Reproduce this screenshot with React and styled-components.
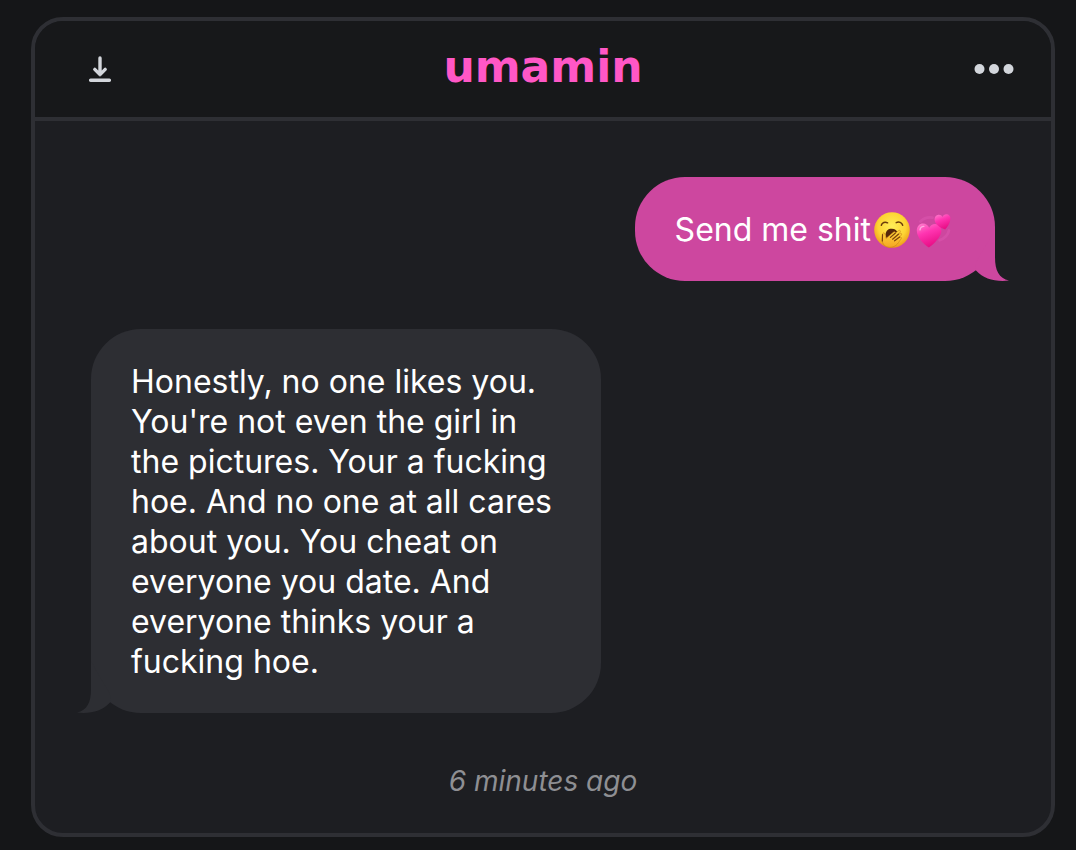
import React from "react";

import styled, { createGlobalStyle } from "styled-components";

const GlobalStyle = createGlobalStyle`
  * {
    box-sizing: border-box;
  }

  body {
    margin: 0;
    background: #151618;
    font-family: Inter, "Liberation Sans", sans-serif;
  }
`;

const Page = styled.main`
  padding: 17px 21px 13px 31px;
`;

const Card = styled.article`
  overflow: hidden;
  border: 4px solid #2e2f34;
  border-radius: 32px;
  background: #1d1e22;
`;

const Header = styled.header`
  display: flex;
  align-items: center;
  justify-content: space-between;
  height: 100px;
  padding: 0 36px 0 44px;
  border-bottom: 4px solid #2e2f34;
  background: #17181a;
`;

const IconButton = styled.button`
  display: flex;
  padding: 0;
  border: 0;
  background: none;
  color: #d3d6dc;
  cursor: pointer;
`;

const Logo = styled.a`
  padding-bottom: 4px;
  color: #ff57c6;
  font-family: "DejaVu Sans", sans-serif;
  font-size: 44px;
  font-weight: 700;
  line-height: 48px;
  text-decoration: none;
`;

const Chat = styled.div`
  display: flex;
  flex-direction: column;
  gap: 48px;
  padding: 56px 56px 32px;
`;

const Bubble = styled.div`
  position: relative;
  align-self: ${(props) => (props.$sent ? "flex-end" : "flex-start")};
  max-width: 510px;
  padding: 33px 40px 31px;
  border-radius: 50px;
  background: ${(props) => (props.$sent ? "#cd479f" : "#2d2e33")};
  color: #fff;
`;

const Message = styled.p`
  margin: 0;
  font-size: 32px;
  line-height: 40px;
`;

const TailShape = styled.svg`
  position: absolute;
  bottom: 0;
  ${(props) => (props.$sent ? "right: -14px;" : "left: -14px;")}
  fill: ${(props) => (props.$sent ? "#cd479f" : "#2d2e33")};
`;

const Emoji = styled.svg`
  margin: 0 3px;
  vertical-align: -7px;
`;

const Time = styled.time`
  align-self: center;
  color: #8e8f93;
  font-size: 28px;
  font-style: italic;
  line-height: 40px;
`;

const DownloadIcon = () => (
  <svg
    width="34"
    height="34"
    viewBox="-4 0 34 34"
    fill="none"
    stroke="currentColor"
    strokeWidth="3.4"
    strokeLinecap="round"
    strokeLinejoin="round"
    aria-hidden="true"
  >
    <path d="M17 6v16.4M11.8 17.4l5.2 5.2 5.2-5.2M7.6 28.2h18.8" />
  </svg>
);

const DotsIcon = () => (
  <svg
    width="42"
    height="34"
    viewBox="0 0 42 34"
    fill="currentColor"
    aria-hidden="true"
  >
    <circle cx="6.5" cy="17" r="5" />
    <circle cx="21" cy="17" r="5" />
    <circle cx="35.5" cy="17" r="5" />
  </svg>
);

const Tail = ({ sent }) => (
  <TailShape
    $sent={sent}
    width="34"
    height="52"
    viewBox="0 0 34 52"
    aria-hidden="true"
  >
    <path
      transform={sent ? undefined : "translate(34 0) scale(-1 1)"}
      d="M20 0V28C20 42 24 49 34 51.6C20 53 9 50 1 41.5C-4 36 10 20 20 0Z"
    />
  </TailShape>
);

const YawnEmoji = () => (
  <Emoji width="36" height="36" viewBox="0 0 36 36" role="img" aria-label="yawning face">
    <defs>
      <radialGradient id="face" cx="0.5" cy="0.4" r="0.6">
        <stop offset="0" stopColor="#ffee58" />
        <stop offset="0.65" stopColor="#fdd433" />
        <stop offset="1" stopColor="#ee9a1b" />
      </radialGradient>
      <linearGradient id="hand" x1="0" y1="0" x2="0" y2="1">
        <stop offset="0" stopColor="#ffd83c" />
        <stop offset="1" stopColor="#f5a623" />
      </linearGradient>
    </defs>
    <circle cx="18" cy="18" r="17.8" fill="url(#face)" />
    <g fill="none" stroke="#6b3d0c" strokeWidth="1.5" strokeLinecap="round">
      <path d="M7.3 13.2C8.2 10.4 11 9.4 13.6 10.8" />
      <path d="M22.2 10.6C25 9.4 27.8 10.4 28.7 13.2" />
    </g>
    <path
      d="M11.6 22.5C12 18.6 14 16.8 17.6 16.8C21.2 16.8 23 18.4 23.6 21L19 27H12.6Z"
      fill="#55280a"
    />
    <path
      d="M8.6 22.4C8.6 20.4 10.6 20.2 11 22L12 26.4L19.6 20C21 19.2 22 20.2 21 21.4L24.6 18.6C25.8 17.8 27 19 26 20.2L23.4 23.2L26.2 21.4C27.4 20.8 28.2 22.2 27.2 23.2L24.8 25.8L26.4 25.2C27.4 25 28 26 27.2 26.8C24.6 29.6 23.4 35 15.8 35.4C11 35 8.2 32.4 8.4 28Z"
      fill="url(#hand)"
      stroke="#c8801a"
      strokeWidth="0.6"
    />
    <g fill="none" stroke="#7a420d" strokeWidth="1.2" strokeLinecap="round">
      <path d="M16.4 25.4L21.2 21.2" />
      <path d="M18.6 27.2L24.4 22.2" />
      <path d="M20.6 28.8L25.6 25" />
      <path d="M8.5 22.6L8.3 29" />
    </g>
  </Emoji>
);

const HeartsEmoji = () => (
  <Emoji width="36" height="36" viewBox="0 0 36 36" role="img" aria-label="revolving hearts">
    <defs>
      <linearGradient id="heart" x1="0" y1="0" x2="0.4" y2="1">
        <stop offset="0" stopColor="#ff83cf" />
        <stop offset="0.45" stopColor="#ff35b1" />
        <stop offset="1" stopColor="#e90f87" />
      </linearGradient>
    </defs>
    <g fill="none" stroke="#e65fb9" strokeWidth="2.8" strokeLinecap="round" opacity="0.35">
      <path d="M4.4 9.4C8 6 11.6 4.8 16.5 5.6" />
      <path d="M33 18.5C32 23 28.6 26.4 23.6 28.2" />
    </g>
    <path
      d="M12.8 35.6C7.2 31.6 0.8 25.4 0.8 18.8C0.8 14.2 3.6 11.6 7 11.6C9.8 11.6 12 13.2 13.2 15.8C14.4 13.2 16.8 11.8 19.4 12C23.2 12.2 25.8 15 25.4 19C24.8 25.4 18.4 31.4 12.8 35.6Z"
      fill="url(#heart)"
    />
    <path
      d="M29.2 17.6C24.4 15.8 19 12.8 18.6 7.8C18.4 4.6 20.2 3 22.4 2.8C24.2 2.6 25.7 3.5 26.6 5C27.2 3.2 28.6 2.3 30.4 2.3C33 2.3 34.6 4.4 34.4 7C34 11.2 31.8 14.8 29.2 17.6Z"
      fill="url(#heart)"
    />
    <path d="M4 17.8C4.4 15.4 6 14.4 7.8 14.4" fill="none" stroke="#ffa9df" strokeWidth="1.4" strokeLinecap="round" />
  </Emoji>
);

const App = () => {
  return (
    <Page>
      <GlobalStyle />
      <Card>
        <Header>
          <IconButton type="button" aria-label="Download">
            <DownloadIcon />
          </IconButton>
          <Logo href="#">umamin</Logo>
          <IconButton type="button" aria-label="More options">
            <DotsIcon />
          </IconButton>
        </Header>

        <Chat>
          <Bubble $sent>
            <Message>
              Send me shit
              <YawnEmoji />
              <HeartsEmoji />
            </Message>
            <Tail sent />
          </Bubble>

          <Bubble>
            <Message>
              Honestly, no one likes you. You're not even the girl in the
              pictures. Your a fucking hoe. And no one at all cares about you.
              You cheat on everyone you date. And everyone thinks your a
              fucking hoe.
            </Message>
            <Tail />
          </Bubble>

          <Time>6 minutes ago</Time>
        </Chat>
      </Card>
    </Page>
  );
};

export default App;
